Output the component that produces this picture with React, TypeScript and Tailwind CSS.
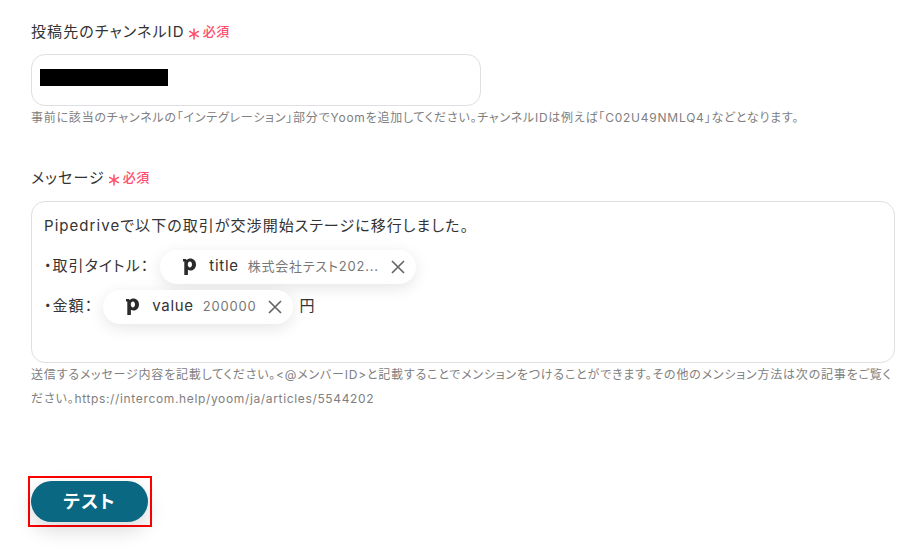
const font = "font-['Inter','Noto_Sans_CJK_JP',sans-serif] [font-feature-settings:'palt']";

function P() {
  return (
    <svg width="13" height="17" viewBox="0 0 13 17" className="shrink-0">
      <path d="M0 1h3l.5 1.100C4.500 1 5.800.5 7.300.5c3.300 0 5.700 2.500 5.700 6 0 3.600-2.400 6.100-5.700 6.100-1 0-1.800-.3-2.400-.8V17H1.300V3.600H0V1zm4.800 5.500c0 1.700.9 2.900 2.100 2.900s2.100-1.200 2.100-2.900-.9-2.900-2.100-2.900-2.100 1.200-2.100 2.900z" fill="#2b2b2b" fillRule="evenodd" />
    </svg>
  );
}

function X() {
  return (
    <svg width="14" height="14" viewBox="0 0 14 14" className="shrink-0">
      <path d="M1 1l12 12M13 1L1 13" stroke="#666" strokeWidth="1.700" />
    </svg>
  );
}

function Chip({ name, value, className }: { name: string; value: string; className: string }) {
  return (
    <span className={`inline-flex h-[34px] items-center rounded-full bg-white pl-[23px] pr-[11px] shadow-[0_4px_16px_rgba(0,0,0,0.1)] ${className}`}>
      <P />
      <span className="ml-[13px] text-[15px] tracking-[0.7px] text-[#333]">{name}</span>
      <span className="ml-[9px] mr-[12px] text-[13px] tracking-[0.8px] text-[#777]">{value}</span>
      <X />
    </span>
  );
}

function Label({ text }: { text: string }) {
  return (
    <div className="flex h-[24px] items-center">
      <span className="text-[15px] tracking-[1.100px] text-[#333]">{text}</span>
      <svg width="12" height="12" viewBox="0 0 12 12" className="mt-[3px] ml-[3px] shrink-0">
        <path d="M6 .5v11M1.200 3.200l9.600 5.600M10.800 3.200L1.200 8.800" stroke="#ff4d6a" strokeWidth="1.500" />
      </svg>
      <span className="ml-[3px] text-[13px] tracking-[0.5px] font-medium text-[#ff4d6a]">必須</span>
    </div>
  );
}

export default function App() {
  return (
    <div className={`h-[555px] w-[922px] overflow-hidden bg-white pt-[20px] pl-[31px] ${font}`}>
      <Label text="投稿先のチャンネルID" />
      <div className="mt-[10px] h-[52px] w-[450px] rounded-[14px] border border-[#dfdfe3] pt-[14px] pl-[8px]">
        <div className="h-[17px] w-[128px] bg-black" />
      </div>
      <p className="mt-[2px] text-[12px] leading-[20px] tracking-[0.770px] whitespace-nowrap text-[#808080]">事前に該当のチャンネルの「インテグレーション」部分でYoomを追加してください。チャンネルIDは例えば「C02U49NMLQ4」などとなります。</p>
      <div className="mt-[38px]"><Label text="メッセージ" /></div>
      <div className="mt-[11px] h-[162px] w-[864px] rounded-[14px] border border-[#dfdfe3] pt-[9px] pl-[12px] text-[15px] tracking-[1.050px] text-[#333]">
        <div className="flex h-[30px] items-center">Pipedriveで以下の取引が交渉開始ステージに移行しました。</div>
        <div className="mt-[7px] flex h-[37px] items-center">・取引タイトル：<Chip className="ml-[11px]" name="title" value="株式会社テスト202..." /></div>
        <div className="mt-[3px] flex h-[37px] items-center">・金額：<Chip className="ml-[10px]" name="value" value="200000" /><span className="ml-[6px]">円</span></div>
      </div>
      <p className="w-[864px] text-[12px] leading-[24px] tracking-[0.800px] text-[#808080]">送信するメッセージ内容を記載してください。&lt;@メンバーID&gt;と記載することでメンションをつけることができます。その他のメンション方法は次の記事をご覧ください。<span className="tracking-[0.650px]">https://intercom.help/yoom/ja/articles/5544202</span></p>
      <div className="mt-[65px] ml-[-3px] h-[51px] w-[124px] border-2 border-[#f00] pt-[3px] pl-[1px]">
        <button className="h-[41px] w-[117px] rounded-full bg-[#0a6882] text-[18px] font-bold tracking-[1.200px] text-white shadow-[0_8px_20px_rgba(0,0,0,0.15)]">テスト</button>
      </div>
    </div>
  );
}
